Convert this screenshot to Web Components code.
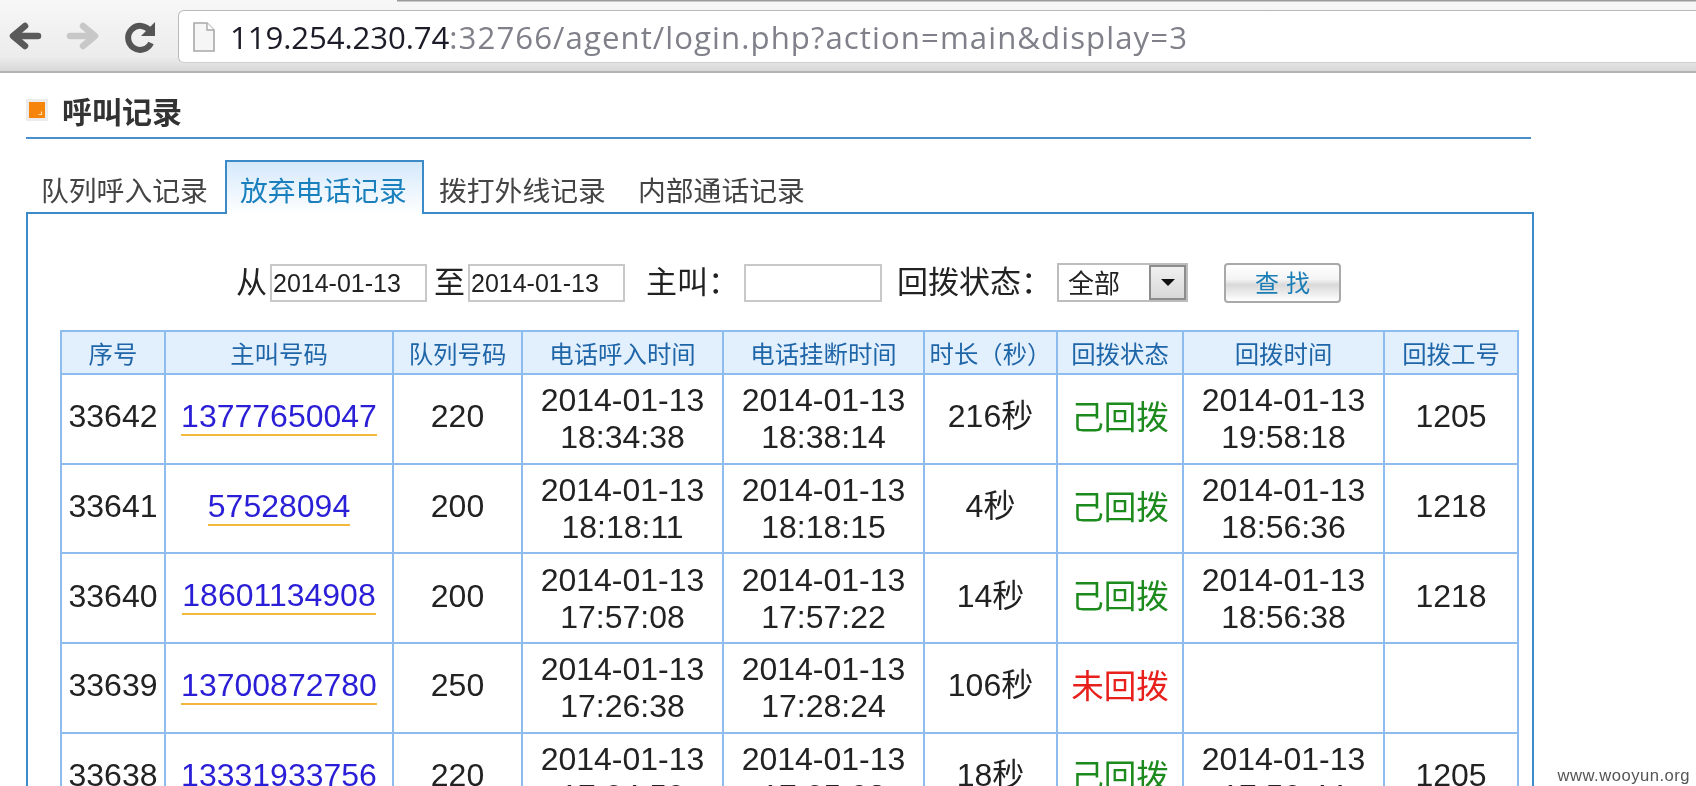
<!DOCTYPE html>
<html lang="zh">
<head>
<meta charset="utf-8">
<title>呼叫记录</title>
<style>
    html, body { margin: 0; height: 786px; overflow: hidden; background: #fff; }
    body { font-family: "Liberation Sans", "Noto Sans CJK SC", sans-serif; color: #222; filter: blur(0.45px); }
</style>
</head>
<body>
<browser-bar url-host="119.254.230.74" url-rest=":32766/agent/login.php?action=main&amp;display=3"></browser-bar>
<section-title>呼叫记录</section-title>
<tab-strip>
    <tab-item>队列呼入记录</tab-item>
    <tab-item active>放弃电话记录</tab-item>
    <tab-item>拨打外线记录</tab-item>
    <tab-item>内部通话记录</tab-item>
</tab-strip>
<record-panel>
    <filter-bar></filter-bar>
    <record-table></record-table>
</record-panel>
<water-mark>www.wooyun.org</water-mark>

<script>
class BrowserBar extends HTMLElement {
    constructor() {
        super();
        const shadow = this.attachShadow({ mode: "open" });
        const host = this.getAttribute("url-host");
        const rest = this.getAttribute("url-rest").replace("&", "&amp;");
        shadow.innerHTML = `
            <style>
                :host {
                    display: flex;
                    align-items: flex-start;
                    box-sizing: border-box;
                    height: 73px;
                    padding-top: 10px;
                    background:
                        linear-gradient(#9a9a9a, #9a9a9a) 397px 0 / 100% 1.5px no-repeat,
                        linear-gradient(#f7f7f7, #ececec 80%, #d8d8d8);
                    border-bottom: 2px solid #b4b4b4;
                    overflow: hidden;
                }
                svg { flex: none; display: block; }
                .nav { width: 178px; height: 52px; }
                .address {
                    flex: 1;
                    box-sizing: border-box;
                    height: 53px;
                    margin-right: -12px;
                    display: flex;
                    align-items: center;
                    gap: 15px;
                    padding-left: 14px;
                    background: #fff;
                    border: 1px solid #b9b9b9;
                    border-bottom-color: #d0d0d0;
                    border-radius: 6px;
                }
                .url {
                    font: 31.2px "Open Sans", sans-serif;
                    color: #80808a;
                    white-space: nowrap;
                    letter-spacing: 1.06px;
                }
                .url b { font-weight: 400; color: #1c1c28; letter-spacing: -0.1px; }
            </style>
            <svg class="nav" viewBox="0 10 178 52">
                <path d="M38 36H15M25 26L13 36L25 46" fill="none" stroke="#5a5a5a" stroke-width="6.5" stroke-linecap="round" stroke-linejoin="round"/>
                <path d="M70 36H93M83 26L95 36L83 46" fill="none" stroke="#c8c8c8" stroke-width="6.5" stroke-linecap="round" stroke-linejoin="round"/>
                <path d="M150 31A12 12 0 1 0 151 43" fill="none" stroke="#555" stroke-width="6"/>
                <path d="M155 22V36H141Z" fill="#555"/>
            </svg>
            <div class="address">
                <svg width="22" height="30" viewBox="0 0 22 30">
                    <path d="M1 1H14L21 8V29H1Z" fill="#f6f6f6" stroke="#a8a8a8" stroke-width="1.6"/>
                    <path d="M14 1V8H21" fill="#fff" stroke="#a8a8a8" stroke-width="1.4"/>
                </svg>
                <div class="url"><b>${host}</b>${rest}</div>
            </div>
        `;
    }
}

class SectionTitle extends HTMLElement {
    constructor() {
        super();
        const shadow = this.attachShadow({ mode: "open" });
        shadow.innerHTML = `
            <style>
                :host {
                    display: flex;
                    align-items: center;
                    gap: 14px;
                    box-sizing: border-box;
                    width: 1505px;
                    height: 66px;
                    margin-left: 26px;
                    padding-top: 10px;
                    border-bottom: 2px solid #4a8fcb;
                    font: 700 30px "Noto Sans CJK SC", sans-serif;
                    color: #333;
                }
                svg { flex: none; display: block; }
            </style>
            <svg width="22" height="22" viewBox="0 0 22 22">
                <rect width="22" height="22" fill="#ececec"/>
                <rect x="3" y="3" width="16" height="16" fill="#f5850b"/>
                <path d="M15.5 12.5V15.5H12.5" fill="none" stroke="#ffd9a8" stroke-width="1.2"/>
            </svg>
            <slot></slot>
        `;
    }
}

class TabStrip extends HTMLElement {
    constructor() {
        super();
        const shadow = this.attachShadow({ mode: "open" });
        shadow.innerHTML = `
            <style>
                :host {
                    display: flex;
                    align-items: flex-end;
                    height: 54px;
                    margin: 21px 0 -2px 26px;
                    position: relative;
                    z-index: 1;
                }
            </style>
            <slot></slot>
        `;
    }
}

class TabItem extends HTMLElement {
    constructor() {
        super();
        const shadow = this.attachShadow({ mode: "open" });
        shadow.innerHTML = `
            <style>
                :host {
                    display: block;
                    box-sizing: border-box;
                    width: 199px;
                    height: 54px;
                    padding: 7px 0 0 13px;
                    border: 2px solid transparent;
                    border-bottom: 0;
                    font: 27.8px/40px "Noto Sans CJK SC", sans-serif;
                    color: #444;
                    white-space: nowrap;
                }
                :host([active]) {
                    border-color: #3d8ac9;
                    background: linear-gradient(#d5e9fb, #fff);
                    color: #1a80bd;
                }
            </style>
            <slot></slot>
        `;
    }
}

class RecordPanel extends HTMLElement {
    constructor() {
        super();
        const shadow = this.attachShadow({ mode: "open" });
        shadow.innerHTML = `
            <style>
                :host {
                    display: block;
                    box-sizing: border-box;
                    width: 1508px;
                    height: 700px;
                    margin-left: 26px;
                    padding: 49px 0 0 32px;
                    border: 2px solid #3d8ac9;
                }
            </style>
            <slot></slot>
        `;
    }
}

class FilterBar extends HTMLElement {
    constructor() {
        super();
        const shadow = this.attachShadow({ mode: "open" });
        shadow.innerHTML = `
            <style>
                :host {
                    display: flex;
                    align-items: center;
                    height: 39px;
                    padding-left: 176px;
                    font: 31px/36px "Noto Sans CJK SC", sans-serif;
                    color: #222;
                    white-space: nowrap;
                }
                .label { margin-bottom: 5px; }
                .field {
                    box-sizing: border-box;
                    height: 38px;
                    border: 2px solid #c8c8c8;
                    background: #fff;
                    font: 25px/34px "Liberation Sans", sans-serif;
                    padding-left: 1px;
                }
                .date { width: 157px; margin: 0 7px 0 3px; }
                .date + .label + .date { margin-right: 21px; }
                .caller { width: 138px; margin: 0 15px 0 5px; }
                .select {
                    display: flex;
                    box-sizing: border-box;
                    width: 131px;
                    height: 39px;
                    margin-left: 5px;
                    border: 2px solid #bdbdbd;
                    font: 26px/33px "Noto Sans CJK SC", sans-serif;
                    padding-left: 9px;
                }
                .select span { flex: 1; }
                .arrow {
                    display: flex;
                    align-items: center;
                    justify-content: center;
                    width: 33px;
                    border: 2px solid #8c8c8c;
                    background: linear-gradient(#f0f0f0, #d8d8d8);
                }
                .arrow i {
                    border: 7px solid transparent;
                    border-top: 7px solid #111;
                    border-bottom: 0;
                }
                .search {
                    box-sizing: border-box;
                    width: 117px;
                    height: 40px;
                    margin-left: 36px;
                    border: 2px solid #a9a9a9;
                    border-radius: 4px;
                    background: linear-gradient(#fff, #f4f4f4 40%, #d9d9d9 55%, #f2f2f2 85%, #fff);
                    text-align: center;
                    font: 24px/34px "Noto Sans CJK SC", sans-serif;
                    letter-spacing: 7px;
                    text-indent: 7px;
                    color: #1a7db5;
                }
            </style>
            <span class="label">从</span>
            <div class="field date">2014-01-13</div>
            <span class="label">至</span>
            <div class="field date">2014-01-13</div>
            <span class="label">主叫：</span>
            <div class="field caller"></div>
            <span class="label">回拨状态：</span>
            <div class="select"><span>全部</span><div class="arrow"><i></i></div></div>
            <div class="search">查找</div>
        `;
    }
}

const RECORDS = [
    ["33642", "13777650047", "220", "18:34:38", "18:38:14", "216秒", "己回拨", "19:58:18", "1205"],
    ["33641", "57528094", "200", "18:18:11", "18:18:15", "4秒", "己回拨", "18:56:36", "1218"],
    ["33640", "18601134908", "200", "17:57:08", "17:57:22", "14秒", "己回拨", "18:56:38", "1218"],
    ["33639", "13700872780", "250", "17:26:38", "17:28:24", "106秒", "未回拨", "", ""],
    ["33638", "13331933756", "220", "17:24:50", "17:25:08", "18秒", "己回拨", "17:50:44", "1205"],
];

class RecordTable extends HTMLElement {
    constructor() {
        super();
        const shadow = this.attachShadow({ mode: "open" });
        const day = "2014-01-13";
        const stamp = (t) => t ? `${day}<br>${t}` : "";
        const rows = RECORDS.map((r) => `
            <tr>
                <td>${r[0]}</td>
                <td><a>${r[1]}</a></td>
                <td>${r[2]}</td>
                <td class="time">${stamp(r[3])}</td>
                <td class="time">${stamp(r[4])}</td>
                <td>${r[5]}</td>
                <td class="${r[6] === "未回拨" ? "missed" : "done"}">${r[6]}</td>
                <td class="time">${stamp(r[7])}</td>
                <td>${r[8]}</td>
            </tr>`).join("");
        shadow.innerHTML = `
            <style>
                :host { display: block; margin-top: 28px; }
                table {
                    border-collapse: collapse;
                    table-layout: fixed;
                    width: 1459px;
                    font: 32px/37px "Liberation Sans", "Noto Sans CJK SC", sans-serif;
                    color: #222;
                }
                th, td {
                    box-sizing: border-box;
                    border: 2px solid #8fbcee;
                    padding: 0;
                    text-align: center;
                    white-space: nowrap;
                }
                th {
                    height: 43px;
                    background: #e2effd;
                    font: 400 24.4px/30px "Noto Sans CJK SC", sans-serif;
                    color: #1f66a8;
                }
                td { height: 89.7px; padding-bottom: 4px; }
                td.time { padding: 1px 0 0; }
                a {
                    display: inline-block;
                    line-height: 35px;
                    border-bottom: 2px solid #f2b93c;
                    color: #2a1fd6;
                }
                .done, .missed { font: 32.5px "Noto Sans CJK SC", sans-serif; padding-bottom: 9px; }
                .done { color: #1d8a1d; }
                .missed { color: #e8201c; }
            </style>
            <table>
                <colgroup>
                    <col style="width:104px"><col style="width:228px"><col style="width:129px">
                    <col style="width:201px"><col style="width:201px"><col style="width:133px">
                    <col style="width:126px"><col style="width:201px"><col style="width:134px">
                </colgroup>
                <tr>
                    <th>序号</th><th>主叫号码</th><th>队列号码</th><th>电话呼入时间</th><th>电话挂断时间</th>
                    <th>时长（秒）</th><th>回拨状态</th><th>回拨时间</th><th>回拨工号</th>
                </tr>
                ${rows}
            </table>
        `;
    }
}

class WaterMark extends HTMLElement {
    constructor() {
        super();
        const shadow = this.attachShadow({ mode: "open" });
        shadow.innerHTML = `
            <style>
                :host {
                    position: absolute;
                    right: 6px;
                    bottom: 0;
                    font: 16.6px/20px "Liberation Sans", sans-serif;
                    letter-spacing: 0.5px;
                    color: #555;
                }
            </style>
            <slot></slot>
        `;
    }
}

customElements.define("browser-bar", BrowserBar);
customElements.define("section-title", SectionTitle);
customElements.define("tab-strip", TabStrip);
customElements.define("tab-item", TabItem);
customElements.define("record-panel", RecordPanel);
customElements.define("filter-bar", FilterBar);
customElements.define("record-table", RecordTable);
customElements.define("water-mark", WaterMark);
</script>
</body>
</html>
